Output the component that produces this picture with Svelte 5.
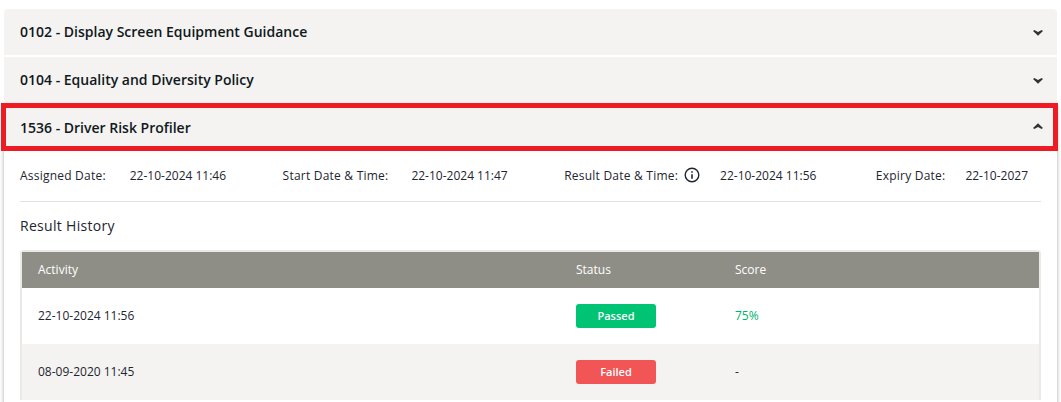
<script>
	const closed = [
		"0102 - Display Screen Equipment Guidance",
		"0104 - Equality and Diversity Policy",
	];
	const rows = [
		{ activity: "22-10-2024 11:56", status: "Passed", score: "75%" },
		{ activity: "08-09-2020 11:45", status: "Failed", score: "-" },
	];
</script>

<div class="accordion">
	{#each closed as title}
		<div class="item-header">
			<span>{title}</span>
			<svg class="chevron down" viewBox="0 0 10 6" width="10" height="6"><path d="M0 1 L1.4 0 L5 2 L8.6 0 L10 1 L5 5.8 Z" /></svg>
		</div>
	{/each}
	<div class="open-item">
		<div class="item-header active">
			<span>1536 - Driver Risk Profiler</span>
			<svg class="chevron up" viewBox="0 0 10 6" width="10" height="6"><path d="M0 5 L1.4 6 L5 4 L8.6 6 L10 5 L5 0.2 Z" /></svg>
		</div>
		<div class="panel">
			<div class="dates">
				<div class="date"><span class="label">Assigned Date:</span><span>22-10-2024 11:46</span></div>
				<div class="date start"><span class="label">Start Date &amp; Time:</span><span>22-10-2024 11:47</span></div>
				<div class="date result">
					<span class="label with-icon">Result Date &amp; Time:
						<svg viewBox="0 0 16 16" width="16" height="16" fill="none" stroke="#1d2530">
							<circle cx="8" cy="8" r="6.8" stroke-width="1.4" />
							<path d="M8 7.2 V11.8" stroke-width="1.6" />
							<path d="M8 4.2 V5.8" stroke-width="1.6" />
						</svg>
					</span>
					<span>22-10-2024 11:56</span>
				</div>
				<div class="date expiry"><span class="label">Expiry Date:</span><span>22-10-2027</span></div>
			</div>
			<h3>Result History</h3>
			<div class="table">
				<div class="row head">
					<div>Activity</div>
					<div>Status</div>
					<div>Score</div>
				</div>
				{#each rows as r}
					<div class="row">
						<div>{r.activity}</div>
						<div><span class="badge {r.status.toLowerCase()}">{r.status}</span></div>
						<div class={r.status === "Passed" ? "score-ok" : ""}>{r.score}</div>
					</div>
				{/each}
			</div>
		</div>
	</div>
</div>

<style>
	:global(html), :global(body) {
		height: 402px;
		overflow: hidden;
		background: #fff;
	}
	.accordion {
		margin: 9px 4px 0;
		font-family: "Open Sans", sans-serif;
		color: #1d2530;
		display: flex;
		flex-direction: column;
		gap: 2px;
	}
	.item-header {
		box-sizing: border-box;
		height: 46px;
		background: #f4f3f1;
		display: flex;
		justify-content: space-between;
		align-items: center;
		padding: 0 14px 2px 16px;
		font-size: 14px;
		font-weight: 600;
		color: #101820;
	}
	.item-header:first-child {
		border-radius: 4px 4px 0 0;
	}
	.chevron {
		fill: #333;
	}
	.chevron.down {
		margin-top: 4px;
	}
	.chevron.up {
		margin-bottom: 2px;
	}
	.open-item {
		box-shadow: 0 1px 4px rgba(0, 0, 0, 0.35);
	}
	.active {
		position: relative;
	}
	.active::after {
		content: "";
		position: absolute;
		top: -2px;
		bottom: 0;
		left: -3px;
		right: -1px;
		border: 5px solid #ed1c24;
	}
	.panel {
		background: #fff;
		padding: 0 16px;
		height: 260px;
	}
	.dates {
		box-sizing: border-box;
		height: 51px;
		display: flex;
		gap: 56.5px;
		align-items: center;
		padding: 0 13px 2px 0;
		border-bottom: 1px solid #e2e2e2;
		font-size: 12px;
	}
	.date {
		display: flex;
		gap: 24px;
		align-items: center;
	}
	.date.start {
		gap: 23px;
	}
	.date.result {
		gap: 20px;
	}
	.date.expiry {
		gap: 20px;
		margin-left: auto;
	}
	.label {
		color: #1d2530;
		letter-spacing: 0.22px;
	}
	.with-icon {
		display: flex;
		align-items: center;
		gap: 6px;
	}
	h3 {
		margin: 14px 0 15px;
		font-size: 14px;
		line-height: 19px;
		font-weight: 400;
		letter-spacing: 0.3px;
	}
	.table {
		box-sizing: border-box;
		width: 1021px;
		border: 2px solid #e9e9e6;
		border-bottom: 0;
		border-radius: 4px 4px 0 0;
		font-size: 12px;
	}
	.row {
		box-sizing: border-box;
		height: 56px;
		display: grid;
		grid-template-columns: 538px 159px 1fr;
		align-items: center;
		padding: 0 0 0 16px;
	}
	.row > div:not(:nth-child(2)) {
		padding-bottom: 2px;
	}
	.row:nth-child(odd) {
		background: #f4f3f1;
	}
	.row.head {
		height: 36px;
		background: #8e8e86;
		color: #fff;
	}
	.row.head > div:nth-child(2) {
		padding-bottom: 2px;
	}
	.badge {
		display: block;
		width: 80px;
		height: 24px;
		line-height: 23px;
		border-radius: 3px;
		text-align: center;
		font-size: 11px;
		font-weight: 600;
		color: #fff;
	}
	.passed {
		background: #00c473;
	}
	.failed {
		background: #f15555;
	}
	.score-ok {
		color: #00b46a;
	}
</style>
